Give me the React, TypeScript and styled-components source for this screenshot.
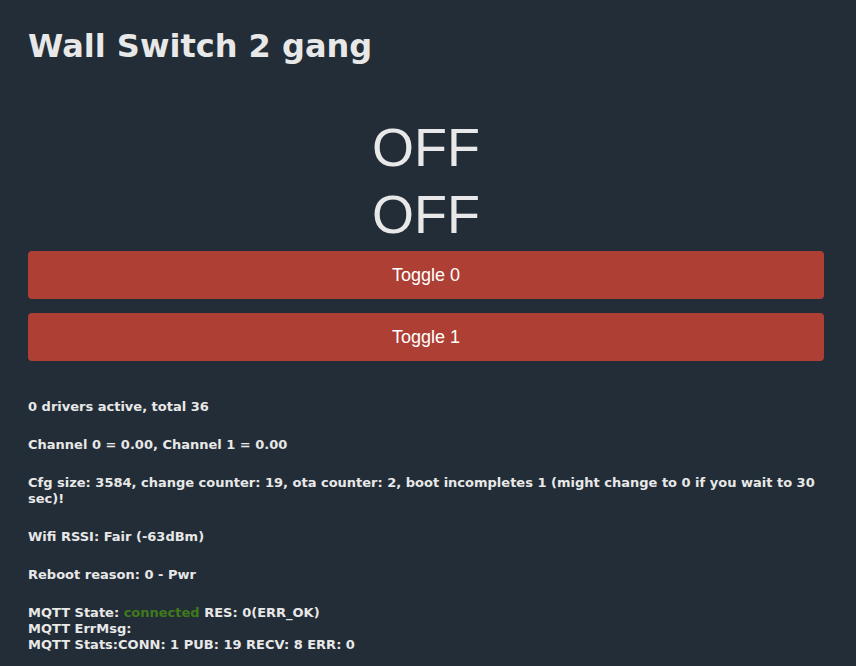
import React from "react";
import styled, { createGlobalStyle } from "styled-components";

const GlobalStyle = createGlobalStyle`
  html, body {
    margin: 0;
    padding: 0;
    background: #232d37;
  }
  body {
    color: #e8e8e8;
    font-family: "DejaVu Sans", Verdana, sans-serif;
  }
`;

const Page = styled.div`
  min-height: 666px;
  padding: 26px 32px 0 28px;
  box-sizing: border-box;
`;

const Title = styled.h1`
  margin: 0 0 48px;
  font-size: 32px;
  font-weight: bold;
  line-height: 40px;
`;

const States = styled.div`
  display: flex;
  flex-direction: column;
  align-items: center;
  font-family: "Liberation Sans", Arial, sans-serif;
  font-size: 54px;
  line-height: 67px;
  margin-bottom: 3px;
`;

const Buttons = styled.div`
  display: flex;
  flex-direction: column;
  gap: 14px;
  margin-bottom: 38px;
`;

const ToggleButton = styled.button`
  height: 48px;
  width: 100%;
  border: none;
  border-radius: 4px;
  background: #ad3f35;
  color: #ffffff;
  font-family: "Liberation Sans", Arial, sans-serif;
  font-size: 18px;
  cursor: pointer;
`;

const Info = styled.div`
  margin-right: -4px;
  font-size: 13px;
  font-weight: bold;
  line-height: 16px;
`;

const Para = styled.p`
  margin: 0 0 22px;
`;

const Good = styled.span`
  color: #3f7a1d;
`;

export default function App() {
  const states = ["OFF", "OFF"];
  return (
    <>
      <GlobalStyle />
      <Page>
        <Title>Wall Switch 2 gang</Title>
        <States>
          {states.map((s, i) => (
            <div key={i}>{s}</div>
          ))}
        </States>
        <Buttons>
          <ToggleButton>Toggle 0</ToggleButton>
          <ToggleButton>Toggle 1</ToggleButton>
        </Buttons>
        <Info>
          <Para>0 drivers active, total 36</Para>
          <Para>Channel 0 = 0.00, Channel 1 = 0.00</Para>
          <Para>
            Cfg size: 3584, change counter: 19, ota counter: 2, boot incompletes 1 (might change to 0 if you wait to 30 sec)!
          </Para>
          <Para>Wifi RSSI: Fair (-63dBm)</Para>
          <Para>Reboot reason: 0 - Pwr</Para>
          <Para>
            MQTT State: <Good>connected</Good> RES: 0(ERR_OK)
            <br />
            MQTT ErrMsg:
            <br />
            MQTT Stats:CONN: 1 PUB: 19 RECV: 8 ERR: 0
          </Para>
        </Info>
      </Page>
    </>
  );
}
